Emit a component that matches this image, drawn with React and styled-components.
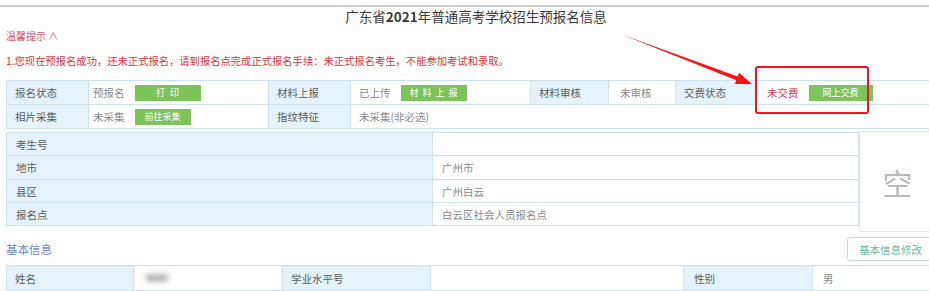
import React from "react";
import styled, { createGlobalStyle } from "styled-components";

const Global = createGlobalStyle`
  html, body {
    margin: 0;
    padding: 0;
    background: #fff;
    overflow: hidden;
  }
  body {
    font-family: "Noto Sans CJK SC", "Noto Sans", sans-serif;
  }
`;

const Page = styled.div`
  position: relative;
  width: 930px;
  padding-left: 6px;
  height: 291px;
  overflow: hidden;
`;

const TopBar = styled.div`
  margin: 5px 0 0 -6px;
  width: 940px;
  height: 2px;
  background: #cbcbcb;
`;

const Title = styled.h1`
  margin: 0;
  padding-left: 10px;
  height: 18px;
  line-height: 18px;
  font-size: 13.5px;
  font-weight: 400;
  color: #3a3a3a;
  text-align: center;

  b {
    font-weight: 700;
  }
`;

const TipHead = styled.div`
  margin-top: 3px;
  height: 16px;
  line-height: 16px;
  font-size: 10px;
  color: #d6566a;
`;

const TipLine = styled.p`
  margin: 9px 0 0;
  height: 16px;
  line-height: 16px;
  font-size: 10.3px;
  color: #db3440;
`;

const Grid = styled.div`
  display: grid;
  grid-template-columns: ${(p) => p.$cols};
  margin-top: ${(p) => p.$top || 0}px;
  border-top: 1px solid #cde2ec;
  border-left: 1px solid #cde2ec;
`;

const Cell = styled.div`
  display: flex;
  align-items: center;
  gap: 10px;
  box-sizing: border-box;
  height: ${(p) => p.$h || 24}px;
  padding: 0 ${(p) => (p.$pad != null ? p.$pad : 8)}px;
  grid-column: span ${(p) => p.$span || 1};
  background: ${(p) => (p.$label ? "#e5f2f9" : "#fff")};
  color: ${(p) => (p.$red ? "#cf3f52" : p.$label ? "#5e5e5e" : "#8a8a8a")};
  font-size: 10.5px;
  white-space: nowrap;
  overflow: hidden;
  border-right: 1px solid #cde2ec;
  border-bottom: 1px solid #cde2ec;
`;

const GreenBtn = styled.span`
  display: inline-flex;
  align-items: center;
  justify-content: center;
  width: ${(p) => p.$w}px;
  height: 16px;
  background: #7cc35a;
  color: #fff;
  font-size: 9px;
  letter-spacing: ${(p) => p.$spaced || 0}px;
  text-indent: ${(p) => p.$spaced || 0}px;
`;

const InfoRow = styled.div`
  display: flex;
  align-items: flex-start;
  margin-top: 2px;
`;

const InfoGrid = styled(Grid)`
  width: 852px;
  flex: none;
  margin-top: 1px;
`;

const Photo = styled.div`
  display: flex;
  align-items: center;
  justify-content: center;
  box-sizing: border-box;
  width: 78px;
  height: 101px;
  border: 1px solid #dde9ee;
  font-size: 30px;
  color: #b9b9b9;
`;

const SectionRow = styled.div`
  display: flex;
  align-items: center;
  justify-content: space-between;
  margin-top: 5px;
  height: 24px;
`;

const SectionTitle = styled.div`
  font-size: 11.5px;
  color: #6a8cca;
`;

const EditBtn = styled.button`
  margin-right: 2px;
  height: 24px;
  padding: 0 11px;
  border: 1px solid #c9ddd9;
  border-radius: 3px;
  background: #fff;
  color: #69bb9f;
  font-family: inherit;
  font-size: 10.5px;
`;

const Blur = styled.span`
  display: inline-block;
  margin-left: 4px;
  width: 22px;
  height: 8px;
  background: #9a9a9a;
  filter: blur(2.5px);
  opacity: 0.7;
`;

const Highlight = styled.div`
  position: absolute;
  left: 755px;
  top: 66px;
  width: 114px;
  height: 48px;
  box-sizing: border-box;
  border: 2.5px solid #f3141c;
  border-radius: 3px;
`;

const Arrow = styled.svg`
  position: absolute;
  left: 0;
  top: 0;
  pointer-events: none;
`;

export default function App() {
  return (
    <>
      <Global />
      <Page>
        <TopBar />
        <Title>
          广东省<b>2021</b>年普通高考学校招生预报名信息
        </Title>
        <TipHead>温馨提示 ∧</TipHead>
        <TipLine>
          1.您现在预报名成功，还未正式报名，请到报名点完成正式报名手续：未正式报名考生，不能参加考试和录取。
        </TipLine>

        <Grid $top={11} $cols="82px 180px 82px 180px 78px 67px 80px 1fr">
          <Cell $label>报名状态</Cell>
          <Cell $pad={4}>
            预报名<GreenBtn $w={66} $spaced={5}>打印</GreenBtn>
          </Cell>
          <Cell $label>材料上报</Cell>
          <Cell>
            已上传<GreenBtn $w={66} $spaced={4}>材料上报</GreenBtn>
          </Cell>
          <Cell $label>材料审核</Cell>
          <Cell $pad={11}>未审核</Cell>
          <Cell $label>交费状态</Cell>
          <Cell $pad={11} $red>
            未交费<GreenBtn $w={64}>网上交费</GreenBtn>
          </Cell>

          <Cell $label>相片采集</Cell>
          <Cell $pad={4}>
            未采集<GreenBtn $w={56}>前往采集</GreenBtn>
          </Cell>
          <Cell $label>指纹特征</Cell>
          <Cell $span={5}>未采集(非必选)</Cell>
        </Grid>

        <InfoRow>
          <InfoGrid $cols="426px 426px">
            <Cell $label $h={23} $pad={9}>考生号</Cell>
            <Cell $h={23} $pad={9}></Cell>
            <Cell $label $h={24} $pad={9}>地市</Cell>
            <Cell $h={24} $pad={9}>广州市</Cell>
            <Cell $label $h={23} $pad={9}>县区</Cell>
            <Cell $h={23} $pad={9}>广州白云</Cell>
            <Cell $label $h={23} $pad={9}>报名点</Cell>
            <Cell $h={23} $pad={9}>白云区社会人员报名点</Cell>
          </InfoGrid>
          <Photo>空</Photo>
        </InfoRow>

        <SectionRow>
          <SectionTitle>基本信息</SectionTitle>
          <EditBtn>基本信息修改</EditBtn>
        </SectionRow>

        <Grid $top={4} $cols="127px 149px 148px 253px 129px 1fr">
          <Cell $label $h={25}>姓名</Cell>
          <Cell $h={25}>
            <Blur />
          </Cell>
          <Cell $label $h={25}>学业水平号</Cell>
          <Cell $h={25}></Cell>
          <Cell $label $h={25} $pad={10}>性别</Cell>
          <Cell $h={25} $pad={10}>男</Cell>
          <Cell $label $h={25}></Cell>
          <Cell $h={25}></Cell>
          <Cell $label $h={25}></Cell>
          <Cell $h={25}></Cell>
          <Cell $label $h={25}></Cell>
          <Cell $h={25}></Cell>
        </Grid>

        <Highlight />
        <Arrow width="929" height="291" viewBox="0 0 929 291">
          <polygon
            points="623,35 737.7,76.4 739.1,72.7 752,84 734.9,83.9 736.3,80.2"
            fill="#f3141c"
          />
        </Arrow>
      </Page>
    </>
  );
}
